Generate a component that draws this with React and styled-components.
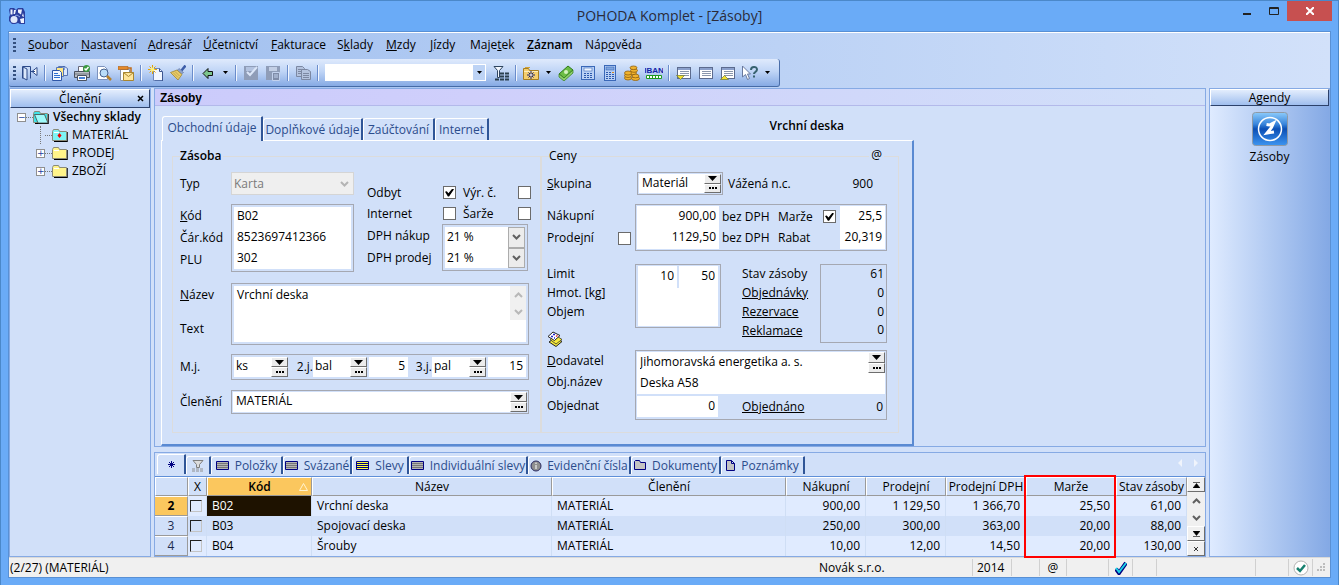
import React from 'react'
import styled, { createGlobalStyle, css } from 'styled-components';

const menu = [
  ['', 'S', 'oubor', 53], ['', 'N', 'astavení', 67], ['', 'A', 'dresář', 55], ['', 'Ú', 'četnictví', 68],
  ['', 'F', 'akturace', 66], ['S', 'k', 'lady', 49], ['', 'M', 'zdy', 44], ['', 'J', 'ízdy', 40],
  ['Maje', 't', 'ek', 57], ['', 'Z', 'áznam', 58], ['Náp', 'o', 'věda', 60],
];

const rows = [
  { no: 2, kod: 'B02', nazev: 'Vrchní deska', nakupni: '900,00', prodejni: '1 129,50', dph: '1 366,70', marze: '25,50', stav: '61,00' },
  { no: 3, kod: 'B03', nazev: 'Spojovací deska', nakupni: '250,00', prodejni: '300,00', dph: '363,00', marze: '20,00', stav: '88,00' },
  { no: 4, kod: 'B04', nazev: 'Šrouby', nakupni: '10,00', prodejni: '12,00', dph: '14,50', marze: '20,00', stav: '130,00' },
];

/* ---------- icons ---------- */

const Icon = ({ children, w = 16, h = 16 }) => (
  <svg width={w} height={h} viewBox={`0 0 ${w} ${h}`} aria-hidden="true">{children}</svg>
);

const AppLogo = () => (
  <Icon w={18} h={18}>
    <path d="M2 1h4l2 2 2-2h5l2 4v12h-5l-2-1-3 1H4l-3-3v-4l1-2-1-5z" fill="#2b3f9e" />
    <path d="M2.500 2.500h2v5h-2zM6 3h2l-1 4H5.500zM10 2.500h4l-1 5-3-2zM15 6l1 4-2-1zM12 12l4-1v5h-3z" fill="#eef3fd" />
    <circle cx="6" cy="12.500" r="3.500" fill="#dfe8fb" />
    <path d="M9 8l3 2M9 8l-2 1" stroke="#8fa8e6" />
  </Icon>
);

const ExitIcon = () => (
  <Icon>
    <path d="M.500 13.500V1.500h8v12" fill="none" stroke="#2c4a8a" />
    <path d="M1 2l4 2v11l-4-2z" fill="#dbe8fb" stroke="#2c4a8a" />
    <path d="M15 2.500v8l-5-4z" fill="#fff" stroke="#2c4a8a" />
    <path d="M9 6.500h4" stroke="#2c4a8a" />
  </Icon>
);

const DocsIcon = () => (
  <Icon>
    <path d="M6.500 1.500h6l3 2v7h-9z" fill="#dbe9ff" stroke="#5573b5" />
    <path d="M4.500 2.500h6l1 1v8h-7z" fill="#ffe884" stroke="#5573b5" />
    <path d="M.500 5.500h7l2 2v8h-9z" fill="#f4f8ff" stroke="#2f57a8" />
    <path d="M2 8.500h4M2 10.500h6M2 12.500h6" stroke="#2f6fd0" />
    <path d="M12 1v4" stroke="#2f57a8" />
  </Icon>
);

const PrinterIcon = () => (
  <Icon>
    <path d="M4.500 6V1.500h5V6" fill="#fff" stroke="#667" />
    <path d="M.500 6.500h15v6h-15z" fill="#b9bec6" stroke="#4b5260" />
    <path d="M1 9h14" stroke="#70767f" />
    <path d="M3.500 10.500h9v5h-9z" fill="#fff" stroke="#4b5260" />
    <path d="M5 13h6" stroke="#4a84da" strokeWidth="2" />
    <circle cx="12.500" cy="3.500" r="3.500" fill="#3c9a43" />
    <path d="M10.500 3.500l1.500 1.500 2.500-3" fill="none" stroke="#fff" strokeWidth="1.500" />
  </Icon>
);

const PreviewIcon = () => (
  <Icon>
    <path d="M1.500 1.500h7l3 3v10h-10z" fill="#fff" stroke="#7d92bd" />
    <circle cx="8" cy="8" r="4" fill="#b9dcf8" stroke="#46618f" />
    <path d="M11 11l4 4" stroke="#b7802a" strokeWidth="2.500" />
  </Icon>
);

const MailIcon = () => (
  <Icon>
    <path d="M2.500 4.500h9v11h-9z" fill="#fff" stroke="#8a94a8" />
    <path d="M0 1.500h10v3H0z" fill="#e58a2a" stroke="#a85a12" strokeWidth=".6" />
    <path d="M10 3h3v4" fill="none" stroke="#c06c1a" strokeWidth="1.500" />
    <path d="M5.500 7.500h10v8h-10z" fill="#ffe59a" stroke="#a9862f" />
    <path d="M5.500 7.500l5 4 5-4" fill="none" stroke="#a9862f" />
  </Icon>
);

const NewIcon = () => (
  <Icon>
    <path d="M5.500 3.500h6l3 3v9h-9z" fill="#f2f7ff" stroke="#6d87bd" />
    <path d="M11.500 3.500v3h3" fill="none" stroke="#3d5690" />
    <path d="M14.500 7v9H7" fill="none" stroke="#3d5690" />
    <path d="M4.500 0v9M0 4.500h9M1.500 1.500l6 6M7.500 1.500l-6 6" stroke="#e8a400" />
    <circle cx="4.500" cy="4.500" r="2" fill="#fff27a" />
  </Icon>
);

const BrushIcon = () => (
  <Icon>
    <path d="M15.500.500l-4 5" stroke="#3d5da8" strokeWidth="2.500" />
    <path d="M9 3.500l4.500 4-2 1.500L7 5.500z" fill="#8fa4cf" stroke="#5a6e9c" strokeWidth=".6" />
    <path d="M7 5l5 4.500-4 5.500L.500 7.500z" fill="#e6ca6a" stroke="#9a7d22" strokeWidth=".7" />
    <path d="M3 7.500l5 5M5 6.500l4.500 4.500" stroke="#b2922f" strokeWidth=".6" />
  </Icon>
);

const BackIcon = () => (
  <Icon><path d="M3 8.500L8 3.500v3h4.500v4H8v3z" fill="#7cc58c" stroke="#111" /></Icon>
);

const SaveIcon = ({ second }) => (
  <Icon>
    <path d="M1 1h14v14H1z" fill="#8f9db8" />
    {!second && <path d="M3 2h9v4H3z" fill="#b3c3e0" />}
    {!second && <path d="M4 7l3 3 7-8" fill="none" stroke="#dbe6f8" strokeWidth="2" />}
    {second && <path d="M4 2h8v4H4z" fill="#c3cfe5" />}
    {second && <path d="M7.500 7.500h7v8h-7z" fill="#7f8ca8" stroke="#c3d2ee" />}
    {second && <path d="M9 10h4M9 12h4" stroke="#c3d2ee" />}
  </Icon>
);

const CopyIcon = () => (
  <Icon>
    <path d="M1.500 1.500h6l2 2v8h-8z" fill="#b4c3de" stroke="#7c88a2" />
    <path d="M3 4.500h4M3 6.500h4M3 8.500h4" stroke="#7c88a2" />
    <path d="M6.500 4.500h6l3 2v8h-9z" fill="#b4c3de" stroke="#7c88a2" />
    <path d="M8 8.500h6M8 10.500h6M8 12.500h6" stroke="#7c88a2" />
  </Icon>
);

const FilterIcon = () => (
  <Icon>
    <path d="M1 1.500h9L6.500 5.500v7h-2v-7z" fill="#f4f8ff" stroke="#2f4560" />
    <path d="M7 8.500h9M7 11.500h9M2 14.500h14" stroke="#2a3f4f" strokeWidth="2" strokeDasharray="4 1" />
  </Icon>
);

const FolderStarIcon = () => (
  <Icon>
    <path d="M.500 3.500h5l1 2h9v9h-15z" fill="#f5cf6e" stroke="#a77f20" />
    <path d="M2 2.500h5" stroke="#d1a23a" />
    <path d="M1 6.500h14" stroke="#fdeebc" />
    <path d="M8 6v8M4 10h8M5.500 7.500l5 5M10.500 7.500l-5 5" stroke="#1a2370" />
    <circle cx="8" cy="10" r="1" fill="#fff" />
  </Icon>
);

const MoneyIcon = () => (
  <Icon>
    <path d="M1 9l9-8 5 4-9 8z" fill="#6cbd45" stroke="#2e7a1a" />
    <path d="M1 9v3l5 4 9-8V5l-9 8z" fill="#8fd06a" stroke="#2e7a1a" strokeWidth=".7" />
    <circle cx="8" cy="7" r="2" fill="#d5f2c0" />
  </Icon>
);

const CalcIcon = ({ tall }) => (
  <Icon>
    <rect x={tall ? 2.5 : 1.5} y={tall ? 0.5 : 1.5} width={tall ? 11 : 13} height={tall ? 15 : 13} fill="#b9d1f5" stroke="#3a68b8" />
    <rect x="4" y={tall ? 2 : 3} width="8" height="3" fill={tall ? '#7fa6de' : '#eef5ff'} stroke="#3a68b8" strokeWidth=".6" />
    <path d={tall ? 'M4 7.500h8M4 9.500h8M4 11.500h8M4 13.500h8' : 'M4 8.500h9M4 10.500h9M4 12.500h9'} stroke="#2c59ad" strokeDasharray="2 1" />
    {tall && <path d="M10 7.500h2" stroke="#d68b22" />}
  </Icon>
);

const CoinsIcon = () => (
  <Icon>
    <g fill="#f0b32e" stroke="#91600c" strokeWidth=".8">
      <ellipse cx="9" cy="8" rx="3.500" ry="1.800" />
      <ellipse cx="10" cy="5.500" rx="3.500" ry="1.800" />
      <ellipse cx="9.500" cy="2.800" rx="3.500" ry="1.800" />
      <ellipse cx="4" cy="13" rx="3.500" ry="2" />
      <ellipse cx="4" cy="10.500" rx="3.500" ry="2" />
      <ellipse cx="4" cy="8" rx="3.500" ry="2" />
      <ellipse cx="11.500" cy="13.500" rx="4" ry="2" />
      <ellipse cx="11.500" cy="11" rx="3.500" ry="1.800" />
    </g>
  </Icon>
);

const IbanIcon = () => (
  <Icon w={18}>
    <text x="9" y="8" textAnchor="middle" fontSize="8" fontWeight="bold" fill="#1423a8" fontFamily="Liberation Sans Narrow, Liberation Sans, sans-serif">IBAN</text>
    <path d="M1.500 10.500h15v3h-15z" fill="#fff" stroke="#1f9a1f" />
    <path d="M4.500 11v3M7.500 11v3M10.500 11v3M13.500 11v3" stroke="#1f9a1f" />
  </Icon>
);

const ListIcon = ({ mark }) => (
  <Icon>
    <rect x="1.500" y="2.500" width="13" height="11" fill="#fff" stroke="#5c6b8e" />
    <path d="M2 4h12" stroke="#8ba0cc" strokeWidth="2" />
    <path d="M4 6.500h9M4 8.500h9M4 10.500h9" stroke="#8a96ac" />
    {mark === 'down' && <path d="M.500 10.500h8l-4 4z" fill="#f4e02e" stroke="#6d7a35" strokeWidth=".7" />}
    {mark === 'up' && <path d="M.500 14.500h8l-4-4z" fill="#f4e02e" stroke="#6d7a35" strokeWidth=".7" />}
  </Icon>
);

const HelpIcon = () => (
  <Icon>
    <path d="M.500 1v11l3-2.500 2 5 2-1-2-4.500h3z" fill="#fff" stroke="#68799e" />
    <path d="M9 5c0-4 6-4 6-.5 0 2.500-3 2.500-3 4.500M12 10.500v2" fill="none" stroke="#37626f" strokeWidth="2" />
  </Icon>
);

const FolderIcon = ({ color = '#fff48a', dot, open }) => (
  <Icon w={16} h={14}>
    <path d="M15 4v9.500H2" fill="none" stroke="#000" strokeWidth="1.500" />
    <path d="M.500 12.500v-9l1-2h5l1 2h7v9z" fill={color} stroke="#8a8a78" />
    {!open && <path d="M2 4.500h5" stroke="#fff" />}
    {open && <path d="M1.500 4.500h10l3.500 8.500H5z" fill="#9ffafa" stroke="#444" strokeWidth=".8" />}
    {dot && <path d="M7.500 5l2 2.500-2 2.500-2-2.500z" fill="#e00" />}
  </Icon>
);

const TableIcon = ({ fill = '#b4b4b4' }) => (
  <Icon w={14} h={10}>
    <path d="M.500.500h12v8h-12z" fill={fill} stroke="#000080" />
    <path d="M1 2.500h11M1 4.500h11M1 6.500h11" stroke={fill === '#ffff3c' ? '#000080' : '#777'} />
  </Icon>
);

const InfoIcon = () => (
  <Icon w={12} h={12}>
    <circle cx="6" cy="6" r="5" fill="#8f8f8f" stroke="#2a2a60" />
    <path d="M6 2.500v1.500M6 5v4" stroke="#ddd" strokeWidth="1.500" />
  </Icon>
);

const DocFolderIcon = () => (
  <Icon w={13} h={11}><path d="M.500 9.500v-8l1-1h4l1 2h5v7z" fill="#c3c3c3" stroke="#000080" /></Icon>
);

const NoteIcon = () => (
  <Icon w={10} h={12}><path d="M.500.500h5l3 3v7h-8zM5.500.500v3h3" fill="#c3c3c3" stroke="#000080" /></Icon>
);

const GreyFilterIcon = () => (
  <Icon w={12} h={12}>
    <path d="M1 .500h10L7.500 4.500v3h-3v-3z" fill="#ddd" stroke="#7e7e7e" />
    <path d="M0 9h12M0 11h12" stroke="#8e8e8e" strokeDasharray="3 1" />
  </Icon>
);

const CardsIcon = () => (
  <Icon>
    <path d="M2 11l6-4 7 3.500-6 5z" fill="#f7ea3c" stroke="#222" />
    <path d="M3 8.500l6-4 6 4-6 4.500z" fill="#f7ea3c" stroke="#222" strokeWidth=".7" />
    <path d="M1 5.500l5-4.500 7 3.500-5.500 5z" fill="#fff" stroke="#222" />
    <path d="M4 5.500h2M6 3.500h2M7 7h1" stroke="#22c" strokeWidth="1.500" />
    <path d="M9 5.500l1.500-1" stroke="#d22" strokeWidth="1.500" />
  </Icon>
);

const StockIcon = () => (
  <Icon w={36} h={34}>
    <defs>
      <linearGradient id="stock" x1="0" y1="0" x2="0" y2="1">
        <stop offset="0" stopColor="#8ccbfb" />
        <stop offset=".35" stopColor="#3a86dc" />
        <stop offset=".5" stopColor="#0b4fb5" />
        <stop offset="1" stopColor="#3d95f0" />
      </linearGradient>
    </defs>
    <rect x=".5" y=".5" width="35" height="33" rx="3" fill="url(#stock)" stroke="#8f9aa6" />
    <circle cx="18" cy="17" r="11.500" fill="none" stroke="#fff" strokeWidth="1.500" />
    <path d="M14.500 12.500l3 .5 4-2-2 4.500-4.500 5.500 3-.5 4-.5" fill="none" stroke="#fff" strokeWidth="3" />
  </Icon>
);

const Chevron = ({ up, color = '#606060' }) => (
  <Icon w={9} h={6}><path d={up ? 'M1 5l3.500-3.500L8 5' : 'M1 1l3.500 3.500L8 1'} fill="none" stroke={color} strokeWidth="2" /></Icon>
);

const Caret = () => <Icon w={7} h={4}><path d="M1 0h5L3.500 3z" fill="#000" /></Icon>;

const CheckMark = () => (
  <Icon w={12} h={14}>
    <path d="M1 8l3 4 7-10" fill="none" stroke="#000080" strokeWidth="4" />
    <path d="M1 7l3 4 7-9" fill="none" stroke="#19d3e6" strokeWidth="2" />
  </Icon>
);

const OkIcon = () => (
  <Icon>
    <circle cx="8" cy="8" r="7" fill="#fff" stroke="#b3b3b3" />
    <path d="M4 8l3 3 5-6" fill="none" stroke="#16806f" strokeWidth="2.500" />
  </Icon>
);

/* ---------- small shared pieces ---------- */

function Picker({ label }) {
  return (
    <PickerBox>
      <PickerButton type="button" aria-label={`${label} – rozbalit`}><Icon w={9} h={5}><path d="M0 0h9L4.500 5z" fill="#000" /></Icon></PickerButton>
      <PickerButton type="button" aria-label={`${label} – výběr`}><Icon w={8} h={2}><path d="M0 0h2v2H0zM3 0h2v2H3zM6 0h2v2H6z" fill="#000" /></Icon></PickerButton>
    </PickerBox>
  )
}

function Tool({ children, label }) {
  return <ToolButton type="button" aria-label={label}>{children}</ToolButton>
}

function VatSelect({ id }) {
  return (
    <SelectWrap>
      <Select id={id} defaultValue="21 %"><option>21 %</option></Select>
      <SelectArrow><Chevron /></SelectArrow>
    </SelectWrap>
  )
}

/* ---------- page parts ---------- */

function Toolbar() {
  return (
    <ToolBar>
      <Grip />
      <Tool label="Konec"><ExitIcon /></Tool>
      <Separator />
      <Tool label="Kopie dokladu"><DocsIcon /></Tool>
      <Tool label="Tisk"><PrinterIcon /></Tool>
      <Tool label="Náhled"><PreviewIcon /></Tool>
      <Tool label="Odeslat"><MailIcon /></Tool>
      <Separator />
      <Tool label="Nový"><NewIcon /></Tool>
      <Tool label="Vyčistit"><BrushIcon /></Tool>
      <Separator />
      <Tool label="Zpět"><BackIcon /></Tool>
      <CaretButton type="button" aria-label="Historie"><Caret /></CaretButton>
      <Separator />
      <Tool label="Uložit"><SaveIcon /></Tool>
      <Tool label="Uložit kopii"><SaveIcon second /></Tool>
      <Separator />
      <Tool label="Kopírovat"><CopyIcon /></Tool>
      <Separator />
      <SearchBox>
        <SearchInput type="text" aria-label="Hledat" />
        <SearchArrow type="button" aria-label="Rozbalit hledání"><Caret /></SearchArrow>
      </SearchBox>
      <Tool label="Filtr"><FilterIcon /></Tool>
      <Separator />
      <Tool label="Oblíbené"><FolderStarIcon /></Tool>
      <CaretButton type="button" aria-label="Další oblíbené"><Caret /></CaretButton>
      <Tool label="Peníze"><MoneyIcon /></Tool>
      <Tool label="Kalkulačka"><CalcIcon /></Tool>
      <Tool label="Přepočet"><CalcIcon tall /></Tool>
      <Tool label="Měny"><CoinsIcon /></Tool>
      <Tool label="Kontrola účtu"><IbanIcon /></Tool>
      <Separator />
      <Tool label="Dolů"><ListIcon mark="down" /></Tool>
      <Tool label="Seznam"><ListIcon /></Tool>
      <Tool label="Nahoru"><ListIcon mark="up" /></Tool>
      <Tool label="Nápověda"><HelpIcon /></Tool>
      <CaretButton type="button" aria-label="Další"><Caret /></CaretButton>
    </ToolBar>
  )
}

function Tree() {
  return (
    <TreeList>
      <TreeRow>
        <Expander>−</Expander><Dots /><FolderIcon color="#3fe3e8" open /><strong>Všechny sklady</strong>
      </TreeRow>
      <TreeBranch>
        <TreeRow><NoExpander /><Dots /><FolderIcon color="#7df4f5" dot /><span>MATERIÁL</span></TreeRow>
        <TreeRow><Expander>+</Expander><Dots /><FolderIcon /><span>PRODEJ</span></TreeRow>
        <TreeRow><Expander>+</Expander><Dots /><FolderIcon /><span>ZBOŽÍ</span></TreeRow>
      </TreeBranch>
    </TreeList>
  )
}

function StockFields() {
  return (
    <Group>
      <legend><strong>Zásoba</strong></legend>
      <TopFields>
        <div>
          <Line $h={23}>
            <Label htmlFor="typ">Typ</Label>
            <SelectWrap $disabled>
              <Select id="typ" disabled defaultValue="Karta"><option>Karta</option></Select>
              <PlainArrow><Chevron color="#b4b4b4" /></PlainArrow>
            </SelectWrap>
          </Line>
          <Line $h={68} $mt={9}>
            <Labels>
              <Label htmlFor="kod"><u>K</u>ód</Label>
              <Label htmlFor="carkod">Čár.kód</Label>
              <Label htmlFor="plu">PLU</Label>
            </Labels>
            <Frame>
              <Input id="kod" defaultValue="B02" />
              <Input id="carkod" defaultValue="8523697412366" />
              <Input id="plu" defaultValue="302" />
            </Frame>
          </Line>
        </div>
        <SideFields>
          <CheckLine>
            <label htmlFor="odbyt">Odbyt</label><Check id="odbyt" defaultChecked />
            <label htmlFor="vyrc">Výr. č.</label><Check id="vyrc" />
          </CheckLine>
          <CheckLine>
            <label htmlFor="inet">Internet</label><Check id="inet" />
            <label htmlFor="sarze">Šarže</label><Check id="sarze" />
          </CheckLine>
          <VatLine>
            <Labels>
              <Label htmlFor="dphn">DPH nákup</Label>
              <Label htmlFor="dphp">DPH prodej</Label>
            </Labels>
            <Frame>
              <VatSelect id="dphn" />
              <VatSelect id="dphp" />
            </Frame>
          </VatLine>
        </SideFields>
      </TopFields>

      <Line $h={62} $mt={11}>
        <NameLabels>
          <Label htmlFor="nazev"><u>N</u>ázev</Label>
          <Label htmlFor="text">Text</Label>
        </NameLabels>
        <NameFrame>
          <NameRow>
            <NameArea id="nazev" rows="1" defaultValue="Vrchní deska" />
            <ScrollStub><Chevron up color="#b8b8b8" /><Chevron color="#b8b8b8" /></ScrollStub>
          </NameRow>
          <Input id="text" />
        </NameFrame>
      </Line>

      <Line $h={26} $mt={9}>
        <Label htmlFor="mj">M.j.</Label>
        <UnitFrame>
          <Input id="mj" defaultValue="ks" /><Picker label="M.j." />
          <label htmlFor="mj2">2.j.</label>
          <Input id="mj2" defaultValue="bal" /><Picker label="2.j." />
          <Input $right aria-label="Počet 2.j." defaultValue="5" />
          <label htmlFor="mj3">3.j.</label>
          <Input id="mj3" defaultValue="pal" /><Picker label="3.j." />
          <Input $right aria-label="Počet 3.j." defaultValue="15" />
        </UnitFrame>
      </Line>

      <Line $h={24} $mt={10}>
        <Label htmlFor="cleneni">Členění</Label>
        <PickFrame>
          <Input id="cleneni" defaultValue="MATERIÁL" /><Picker label="Členění" />
        </PickFrame>
      </Line>
    </Group>
  )
}

function PriceFields() {
  return (
    <Group $right>
      <legend>Ceny</legend>
      <AtSign>@</AtSign>
      <Line $h={23} $label={90}>
        <Label htmlFor="skupina"><u>S</u>kupina</Label>
        <GroupRow>
          <PickFrame>
            <Input id="skupina" defaultValue="Materiál" /><Picker label="Skupina" />
          </PickFrame>
          <span>Vážená n.c.</span>
          <output>900</output>
        </GroupRow>
      </Line>

      <Line $h={47} $mt={9} $label={88}>
        <Labels>
          <Label htmlFor="nakupni">Nákupní</Label>
          <WithCheck><Label htmlFor="prodejni">Prodejní</Label><Check aria-label="Pevná prodejní cena" /></WithCheck>
        </Labels>
        <PriceFrame>
          <Input $right id="nakupni" defaultValue="900,00" />
          <span>bez DPH</span>
          <label htmlFor="marze">Marže</label>
          <Check aria-label="Pevná marže" defaultChecked />
          <Input $right id="marze" defaultValue="25,5" />
          <Input $right id="prodejni" defaultValue="1129,50" />
          <span>bez DPH</span>
          <label htmlFor="rabat">Rabat</label>
          <span />
          <Input $right id="rabat" defaultValue="20,319" />
        </PriceFrame>
      </Line>

      <LimitArea>
        <LimitLabels>
          <Label htmlFor="limit">Limit</Label>
          <Label htmlFor="hmot">Hmot. [kg]</Label>
          <Label htmlFor="objem">Objem</Label>
        </LimitLabels>
        <LimitFrame>
          <Pair>
            <Input $right id="limit" defaultValue="10" />
            <Input $right aria-label="Limit max" defaultValue="50" />
          </Pair>
          <Input $right id="hmot" />
          <Input $right id="objem" />
        </LimitFrame>
        <LimitLabels>
          <span>Stav zásoby</span>
          <TextLink href="#objednavky">Objednávky</TextLink>
          <TextLink href="#rezervace">Rezervace</TextLink>
          <TextLink href="#reklamace">Reklamace</TextLink>
        </LimitLabels>
        <Totals>
          <output>61</output><output>0</output><output>0</output><output>0</output>
        </Totals>
        <CardsButton type="button" aria-label="Adresář"><CardsIcon /></CardsButton>
      </LimitArea>

      <Line $h={69} $mt={7} $label={88}>
        <SupplierLabels>
          <Label htmlFor="dodavatel"><u>D</u>odavatel</Label>
          <Label htmlFor="objnazev">Obj.název</Label>
          <Label htmlFor="objednat">Objednat</Label>
        </SupplierLabels>
        <SupplierFrame>
          <SupplierRow>
            <Input id="dodavatel" defaultValue="Jihomoravská energetika a. s." /><Picker label="Dodavatel" />
          </SupplierRow>
          <Input id="objnazev" defaultValue="Deska A58" />
          <OrderRow>
            <Input $right id="objednat" defaultValue="0" />
            <TextLink href="#objednano">Objednáno</TextLink>
            <output>0</output>
          </OrderRow>
        </SupplierFrame>
      </Line>
    </Group>
  )
}

function Grid() {
  return (
    <GridArea>
      <Table>
        <colgroup>
          <col width="33" /><col width="19" /><col width="105" /><col /><col width="234" />
          <col width="80" /><col width="80" /><col width="80" /><col width="90" /><col width="71" />
        </colgroup>
        <thead>
          <tr>
            <th /><th>X</th>
            <SortedTh><span>Kód</span><Icon w={9} h={8}><path d="M.500 7.500L4.500.500l4 7z" fill="none" stroke="#fff3d0" /></Icon></SortedTh>
            <th>Název</th><th>Členění</th><th>Nákupní</th><th>Prodejní</th><th>Prodejní DPH</th>
            <MarkedTh>Marže</MarkedTh>
            <th>Stav zásoby</th>
          </tr>
        </thead>
        <tbody>
          {rows.map((row, i) => (
            <Row key={row.no} $active={i === 0}>
              <th scope="row">{row.no}</th>
              <td><RowCheck aria-label={`Vybrat ${row.kod}`} /></td>
              <td>{row.kod}</td>
              <td>{row.nazev}</td>
              <td>MATERIÁL</td>
              <Num>{row.nakupni}</Num>
              <Num>{row.prodejni}</Num>
              <Num>{row.dph}</Num>
              <Num>{row.marze}</Num>
              <Num>{row.stav}</Num>
            </Row>
          ))}
        </tbody>
      </Table>
      <GridScroll>
        <RaisedButton type="button" aria-label="Na začátek"><Icon w={7} h={6}><path d="M0 .500h7M3.500 1.500L7 6H0z" fill="#000" stroke="#000" strokeWidth=".6" /></Icon></RaisedButton>
        <FlatButton type="button" aria-label="Nahoru"><Chevron up /></FlatButton>
        <FlatButton type="button" aria-label="Dolů"><Chevron /></FlatButton>
        <RaisedButton type="button" aria-label="Na konec"><Icon w={7} h={6}><path d="M0 5.500h7M0 0h7L3.500 4.500z" fill="#000" stroke="#000" strokeWidth=".6" /></Icon></RaisedButton>
        <RaisedButton type="button" aria-label="Zavřít seznam"><Icon w={4} h={4}><path d="M0 0l4 4M4 0L0 4" stroke="#333" /></Icon></RaisedButton>
      </GridScroll>
    </GridArea>
  )
}

function App() {
  return (
    <Window>
      <GlobalStyle />
      <TitleBar>
        <AppLogo />
        <h1>POHODA Komplet - [Zásoby]</h1>
        <WindowButtons>
          <WindowButton type="button" aria-label="Minimalizovat"><Icon w={8} h={12}><path d="M0 9h8" stroke="#222" strokeWidth="2" /></Icon></WindowButton>
          <WindowButton type="button" aria-label="Maximalizovat"><Icon w={10} h={8}><path d="M.500.500h9v7h-9zM0 1.500h10" fill="none" stroke="#222" /></Icon></WindowButton>
          <CloseButton type="button" aria-label="Zavřít"><Icon w={8} h={8}><path d="M0 0l8 8M8 0L0 8" stroke="#fff" strokeWidth="2" /></Icon></CloseButton>
        </WindowButtons>
      </TitleBar>

      <Client>
        <Bars>
          <MenuBar>
            <Grip $gap={6} />
            {menu.map(([before, key, after, width]) => (
              <MenuItem type="button" key={before + key + after} $w={width} $bold={key === 'Z'}>
                {before}<u>{key}</u>{after}
              </MenuItem>
            ))}
          </MenuBar>
          <Toolbar />
        </Bars>

        <Workspace>
          <Panel>
            <PanelHead>
              <span>Členění</span>
              <PanelClose type="button" aria-label="Zavřít panel"><Icon w={7} h={7}><path d="M1 1l5 5M6 1L1 6" stroke="#000" strokeWidth="1.500" /></Icon></PanelClose>
            </PanelHead>
            <Tree />
          </Panel>

          <Main>
            <Agenda>
              <AgendaTitle>Zásoby</AgendaTitle>
              <FormArea>
                <TabRow>
                  <Tab type="button" $active $w={101}>Obchodní údaje</Tab>
                  <Tab type="button" $w={100}>Doplňkové údaje</Tab>
                  <Tab type="button" $w={72}>Zaúčtování</Tab>
                  <Tab type="button" $w={54}>Internet</Tab>
                  <RecordName>Vrchní deska</RecordName>
                </TabRow>
                <Sheet>
                  <StockFields />
                  <PriceFields />
                </Sheet>
              </FormArea>
            </Agenda>

            <Lower>
              <BottomTabs>
                <BottomTab type="button" $active $w={29} aria-label="Seznam"><Icon w={9} h={9}><path d="M4.500 1v7M1 4.500h7M2 2l5 5M7 2L2 7" stroke="#000080" /></Icon></BottomTab>
                <BottomTab type="button" $w={25} aria-label="Filtr"><GreyFilterIcon /></BottomTab>
                <BottomTab type="button" $w={72}><TableIcon />Položky</BottomTab>
                <BottomTab type="button" $w={69}><TableIcon />Svázané</BottomTab>
                <BottomTab type="button" $w={57}><TableIcon fill="#ffff3c" />Slevy</BottomTab>
                <BottomTab type="button" $w={119}><TableIcon />Individuální slevy</BottomTab>
                <BottomTab type="button" $w={103}><InfoIcon />Evidenční čísla</BottomTab>
                <BottomTab type="button" $w={90}><DocFolderIcon />Dokumenty</BottomTab>
                <BottomTab type="button" $w={84}><NoteIcon />Poznámky</BottomTab>
                <TabArrows>
                  <Icon w={4} h={8}><path d="M4 0v8L0 4z" fill="#f0f4fc" /></Icon>
                  <Icon w={4} h={8}><path d="M0 0v8l4-4z" fill="#f0f4fc" /></Icon>
                </TabArrows>
              </BottomTabs>
              <Grid />
            </Lower>
          </Main>

          <Panel>
            <PanelHead $small><span>Agendy</span></PanelHead>
            <Agendas>
              <AgendaButton type="button"><StockIcon />Zásoby</AgendaButton>
            </Agendas>
          </Panel>
        </Workspace>

        <StatusBar>
          <StatusCell>(2/27) (MATERIÁL)</StatusCell>
          <StatusCell $w={154}>Novák s.r.o.</StatusCell>
          <StatusCell $w={39} $line>2014</StatusCell>
          <StatusCell $w={28} $line />
          <StatusCell $w={27} $line $center>@</StatusCell>
          <StatusCell $w={42} $line />
          <StatusCell $w={24} $line $center><CheckMark /></StatusCell>
          <StatusCell $w={24} $line />
          <StatusCell $w={99} $line />
          <StatusCell $w={33} $line />
          <StatusCell $w={24} $line $center><OkIcon /></StatusCell>
          <StatusCell $w={18} $line $center>
            <Icon w={9} h={9}><path d="M6 0h2v2H6zM3 3h2v2H3zM6 3h2v2H6zM0 6h2v2H0zM3 6h2v2H3zM6 6h2v2H6z" fill="#bdbdbd" /></Icon>
          </StatusCell>
        </StatusBar>
      </Client>
    </Window>
  )
}

const GlobalStyle = createGlobalStyle`
    *, *::before, *::after { box-sizing: border-box; }
    body {
        margin: 0;
        background: #6aabf7;
        font-family: "Open Sans", "Noto Sans", sans-serif;
        font-size: 12px;
        line-height: 16px;
        color: #000;
    }
    button, input, select, textarea {
        font: inherit;
        color: inherit;
        margin: 0;
        padding: 0;
        border: 0;
        border-radius: 0;
        background: none;
    }
    button { white-space: nowrap; }
    strong { font-weight: 600; }
    svg { display: block; flex: none; }
`;

const Window = styled.div`
    display: flex;
    flex-direction: column;
    min-height: 100vh;
    padding: 0 7px 7px;
    border: 1px solid #4b88c9;
    background: #6aabf7;
`;

const TitleBar = styled.header`
    display: grid;
    grid-template-columns: 134px 1fr 134px;
    align-items: center;
    height: 30px;

    h1 {
        margin: 0;
        font-size: 14px;
        font-weight: normal;
        line-height: 28px;
        text-align: center;
        color: #2b2b3a;
    }
`;

const WindowButtons = styled.div`
    display: flex;
    justify-content: flex-end;
    align-self: start;
    margin-right: -1px;
`;

const WindowButton = styled.button`
    display: flex;
    align-items: center;
    justify-content: center;
    width: 27px;
    height: 20px;
`;

const CloseButton = styled(WindowButton)`
    width: 45px;
    background: #c75050;
`;

const Client = styled.div`
    display: flex;
    flex: 1;
    flex-direction: column;
    border: 1px solid #5990d4;
    background: #d1e0f9;
`;

const Bars = styled.div`
    border-top: 1px solid #fff;
    padding-bottom: 1px;
    background: linear-gradient(90deg, #9dbdee, #d2e1fa);
`;

const Grip = styled.span`
    width: 3px;
    height: 14px;
    margin: 0 ${(p) => p.$gap || 3}px 0 4px;
    background: repeating-linear-gradient(#34507f 0 2px, transparent 2px 4px);
`;

const MenuBar = styled.nav`
    display: flex;
    align-items: center;
    height: 26px;
    padding-bottom: 2px;
`;

const MenuItem = styled.button`
    width: ${(p) => p.$w}px;
    padding-left: 6px;
    text-align: left;
    font-weight: ${(p) => (p.$bold ? 600 : 'normal')};
`;

const ToolBar = styled.div`
    display: flex;
    align-items: center;
    width: fit-content;
    height: 28px;
    padding-right: 5px;
    border-right: 1px solid #4a6da8;
    border-bottom: 1px solid #466ba6;
    border-radius: 2px 3px 3px 2px;
    background: linear-gradient(#dfeafc, #c0d5f6 45%, #86aae4);
`;

const ToolButton = styled.button`
    display: flex;
    align-items: center;
    justify-content: center;
    width: 22px;
    height: 24px;
`;

const CaretButton = styled(ToolButton)`
    width: 13px;
`;

const Separator = styled.span`
    width: 2px;
    height: 16px;
    margin: 0 3px;
    border-left: 1px solid #6a8ccb;
    border-right: 1px solid #f1f6fe;
`;

const SearchBox = styled.div`
    display: flex;
    width: 161px;
    height: 17px;
    margin: 0 4px 0 3px;
    background: #fff;
`;

const SearchInput = styled.input`
    flex: 1;
    min-width: 0;
`;

const SearchArrow = styled.button`
    display: flex;
    align-items: center;
    justify-content: center;
    width: 14px;
    border: 1px solid #fff;
    background: #bdd3f5;
`;

const Workspace = styled.div`
    display: grid;
    flex: 1;
    grid-template-columns: 142px 1fr 121px;
    gap: 3px;
`;

const Panel = styled.aside`
    display: flex;
    flex-direction: column;
    border: 1px solid #86aae4;
`;

const PanelHead = styled.div`
    display: flex;
    align-items: center;
    height: ${(p) => (p.$small ? 17 : 19)}px;
    border: 1px solid #fff;
    border-right-color: #2c416b;
    border-bottom-color: #2c416b;
    background: linear-gradient(#e3edfd, #9fbeee);

    span {
        flex: 1;
        text-align: center;
    }
`;

const PanelClose = styled.button`
    display: flex;
    width: 12px;
    margin-left: -12px;
`;

const TreeList = styled.div`
    padding-left: 7px;
`;

const TreeBranch = styled.div`
    padding-left: 19px;
`;

const TreeRow = styled.div`
    display: flex;
    align-items: center;
    height: 18px;

    strong, span:last-child { padding-left: 4px; }
`;

const Expander = styled.i`
    width: 9px;
    height: 9px;
    border: 1px solid #8f8f8f;
    background: #fff;
    font: 9px/7px "DejaVu Sans", sans-serif;
    text-align: center;
    color: #1e3ea0;
`;

const NoExpander = styled.i`
    width: 5px;
    height: 18px;
    margin-left: 4px;
    border-left: 1px dotted #777;
`;

const Dots = styled.i`
    width: 7px;
    border-top: 1px dotted #777;
`;

const Main = styled.main`
    display: flex;
    flex-direction: column;
    gap: 5px;
    min-width: 0;
`;

const Agenda = styled.section`
    flex: 1;
    border: 1px solid #86aae4;
`;

const AgendaTitle = styled.h2`
    margin: 0;
    padding-left: 5px;
    height: 17px;
    border-bottom: 1px solid #b3b9ea;
    background: linear-gradient(90deg, #cbcbfb, #cfcffb 30%, #d1e0f9);
    font: bold 12px/18px "Liberation Sans", Arial, sans-serif;
`;

const FormArea = styled.div`
    width: 759px;
    max-width: 100%;
    padding: 10px 0 0 6px;
`;

const TabRow = styled.div`
    display: flex;
    align-items: flex-end;
    height: 24px;
    padding-left: 1px;
`;

const Tab = styled.button`
    display: flex;
    align-items: center;
    justify-content: center;
    width: ${(p) => p.$w}px;
    height: 22px;
    border-top: 1px solid #fff;
    border-left: 1px solid #fff;
    border-right: 2px solid #2f5597;
    border-radius: 3px 1px 0 0;
    background: #d1e0f9;
    color: #2b4c8c;
    ${(p) => p.$active && css`
        height: 25px;
        margin-bottom: -1px;
        padding-bottom: 2px;
        z-index: 1;
    `}
`;

const RecordName = styled.strong`
    margin-left: auto;
    padding: 2px 70px 0 0;
    align-self: flex-start;
`;

const Sheet = styled.div`
    display: grid;
    grid-template-columns: 369px 1fr;
    padding: 7px 13px 11px 10px;
    border: 1px solid #fff;
    border-right: 2px solid #5a8ad2;
    border-bottom: 2px solid #5a8ad2;
`;

const Group = styled.fieldset`
    position: relative;
    min-width: 0;
    margin: 0;
    padding: ${(p) => (p.$right ? '8px 11px 13px 5px' : '8px 11px 18px 7px')};
    border: 1px solid #dcdcdc;

    legend {
        padding: 0 2px 0 0;
        margin-left: ${(p) => (p.$right ? '2px' : '0')};
    }
`;

// sits on the group border, opposite the legend
const AtSign = styled.span`
    position: absolute;
    top: -17px;
    right: 14px;
    padding: 0 2px;
    background: #d1e0f9;
`;

const Line = styled.div`
    display: grid;
    grid-template-columns: ${(p) => p.$label || 51}px 1fr;
    height: ${(p) => p.$h}px;
    margin-top: ${(p) => p.$mt || 0}px;
`;

const Label = styled.label`
    align-self: center;
    white-space: nowrap;
`;

const Labels = styled.div`
    display: grid;
    grid-auto-rows: 22px;
    padding-top: 1px;
`;

const SupplierLabels = styled.div`
    display: grid;
    grid-template-rows: 21px 21px 1fr;
`;

const NameLabels = styled.div`
    display: flex;
    flex-direction: column;
    align-items: flex-start;
    gap: 18px;
    padding-top: 4px;

    ${Label} { align-self: flex-start; }
`;

const Frame = styled.div`
    display: grid;
    min-width: 0;
    padding: 2px;
    border: 1px solid #a5a8b2;
`;

const NameFrame = styled(Frame)`
    grid-template-rows: 34px 1fr;
`;

const Input = styled.input.attrs({ autoComplete: 'off' })`
    width: 100%;
    min-width: 0;
    min-height: 0;
    padding: 0 3px 2px;
    background: #fff;
    text-align: ${(p) => (p.$right ? 'right' : 'left')};
`;

const Check = styled.input.attrs({ type: 'checkbox' })`
    display: grid;
    place-items: center;
    width: 13px;
    height: 13px;
    border: 1px solid #6b6b6b;
    background: #fff;
    appearance: none;

    &:checked::before {
        content: "";
        width: 9px;
        height: 8px;
        background: #000;
        clip-path: polygon(0 40%, 20% 35%, 38% 60%, 82% 0, 100% 8%, 45% 100%, 32% 100%);
    }
`;

const TopFields = styled.div`
    display: grid;
    grid-template-columns: 174px 161px;
    gap: 13px;
`;

const SideFields = styled.div`
    padding-top: 10px;
`;

const CheckLine = styled.div`
    display: grid;
    grid-template-columns: 76px 20px 55px 13px;
    align-items: center;
    height: 21px;
`;

const VatLine = styled.div`
    display: grid;
    grid-template-columns: 75px 86px;
    height: 47px;
`;

const SelectWrap = styled.div`
    display: grid;
    grid-template-columns: 1fr 17px;
    min-width: 0;
    background: #fff;
    ${(p) => p.$disabled && css`
        border: 1px solid #d5d5d5;
        background: #efefef;
        color: #7a7a7a;
    `}
`;

const Select = styled.select`
    grid-column: 1 / 3;
    grid-row: 1;
    padding-left: 2px;
    appearance: none;
    opacity: 1;
`;

const PlainArrow = styled.span`
    display: grid;
    grid-column: 2;
    grid-row: 1;
    place-items: center;
    pointer-events: none;
`;

const SelectArrow = styled(PlainArrow)`
    border: 1px solid #acacac;
    background: #ececec;
`;

const NameRow = styled.div`
    display: grid;
    grid-template-columns: 1fr 16px;
    min-height: 0;
    background: #fff;
`;

const NameArea = styled.textarea`
    padding: 1px 3px;
    resize: none;
    overflow: hidden;
`;

const ScrollStub = styled.span`
    display: grid;
    place-items: center;
    background: #f0f0f0;
`;

const UnitFrame = styled(Frame)`
    grid-template-columns: 37px 17px 25px 37px 17px 41px 24px 37px 17px 1fr;
    align-items: stretch;

    label {
        align-self: center;
        text-align: right;
    }
    ${Input} { padding-left: 2px; }
    ${Input}[aria-label] {
        margin-left: 2px;
        width: calc(100% - 2px);
    }
`;

const PickFrame = styled(Frame)`
    grid-template-columns: 1fr 17px;
    padding: 1px;
`;

const PickerBox = styled.span`
    display: grid;
    grid-template-rows: 1fr 1fr;
    min-height: 18px;
`;

const PickerButton = styled.button`
    display: grid;
    place-items: center;
    min-height: 0;
    border: 1px solid #fff;
    border-right-color: #6e6e6e;
    border-bottom-color: #6e6e6e;
    background: #ececec;
`;

const GroupRow = styled.div`
    display: grid;
    grid-template-columns: 86px 1fr auto;
    align-items: center;
    gap: 5px;
    padding-right: 14px;

    ${PickFrame} { height: 23px; }
`;

const WithCheck = styled.div`
    display: flex;
    align-items: center;
    justify-content: space-between;
    padding-right: 4px;
`;

const PriceFrame = styled(Frame)`
    grid-template-columns: 82px 56px 48px 17px 1fr;
    padding: 1px;
    align-items: stretch;

    span, label {
        align-self: center;
        padding-left: 3px;
        white-space: nowrap;
    }
    ${Check} { align-self: center; }
`;

const LimitArea = styled.div`
    position: relative;
    display: grid;
    grid-template-columns: 88px 86px 78px 1fr;
    align-items: start;
    height: 79px;
    margin-top: 13px;

    > :nth-child(3) { margin-left: 21px; }
`;

const LimitLabels = styled.div`
    display: grid;
    grid-auto-rows: 19px;
    align-items: center;
    white-space: nowrap;
`;

const LimitFrame = styled(Frame)`
    height: 64px;
    padding: 1px 2px;
    grid-template-rows: 22px 1fr 1fr;
`;

const Pair = styled.div`
    display: grid;
    grid-template-columns: 1fr 1fr;
    gap: 2px;
`;

const Totals = styled.div`
    display: grid;
    grid-template-rows: 18px 19px 19px 17px;
    align-items: center;
    width: 67px;
    height: 79px;
    justify-self: end;
    padding-right: 2px;
    border: 1px solid #a5a8b2;
    text-align: right;
`;

const CardsButton = styled.button`
    position: absolute;
    left: 0;
    bottom: -4px;
`;

const TextLink = styled.a`
    color: #000;
    text-decoration: underline;
`;

const SupplierFrame = styled(Frame)`
    grid-template-rows: 21px 21px 1fr;
    padding: 1px;
`;

const SupplierRow = styled.div`
    display: grid;
    grid-template-columns: 1fr 17px;
`;

const OrderRow = styled.div`
    display: grid;
    grid-template-columns: 81px 1fr auto;
    align-items: center;
    gap: 24px;
    padding: 2px 2px 1px 0;

    ${Input} { height: 21px; }
`;

const Lower = styled.section`
    border: 1px solid #86aae4;
`;

const BottomTabs = styled.div`
    display: flex;
    align-items: flex-end;
    height: 24px;
    padding: 2px 6px 2px 2px;
    border-bottom: 1px solid #5f8fd8;
`;

const BottomTab = styled(Tab)`
    gap: 5px;
    height: 18px;
    padding: 0 1px;
    margin-bottom: 0;
    ${(p) => p.$active && css`height: 20px;`}
`;

const TabArrows = styled.span`
    display: flex;
    gap: 12px;
    margin: 0 1px 7px auto;
`;

const GridArea = styled.div`
    display: grid;
    grid-template-columns: 1fr 18px;
`;

const Table = styled.table`
    width: 100%;
    table-layout: fixed;
    border-collapse: separate;
    border-spacing: 0;

    th, td {
        height: 20px;
        padding: 0 5px;
        white-space: nowrap;
        font-weight: normal;
        line-height: 14px;
    }
    thead th {
        height: 19px;
        padding: 0;
        border-top: 1px solid #fff;
        border-left: 1px solid #fff;
        border-right: 1px solid #9a9a9a;
        border-bottom: 1px solid #9a9a9a;
    }
    td {
        border-right: 1px solid #cfdef5;
    }
`;

const SortedTh = styled.th`
    position: relative;
    background: #fbc75e;

    && { font-weight: 600; }
    svg {
        position: absolute;
        right: 3px;
        top: 5px;
    }
`;

const MarkedTh = styled.th`
    position: relative;

    &::after {
        content: "";
        position: absolute;
        top: -3px;
        left: -3px;
        right: -1px;
        height: 83px;
        border: 2px solid #f00;
        pointer-events: none;
    }
`;

const Num = styled.td`
    text-align: right;
`;

const RowCheck = styled.input.attrs({ type: 'checkbox' })`
    display: block;
    width: 12px;
    height: 12px;
    border: 1px solid #c4c4c4;
    border-top-color: #222;
    border-left-color: #222;
    appearance: none;
`;

const Row = styled.tr`
    background: #e0ebff;

    &:nth-child(even) { background: #d1e0f9; }

    th {
        border-top: 1px solid #fff;
        border-right: 1px solid #9a9a9a;
        border-bottom: 1px solid #9a9a9a;
        background: #d1e0f9;
        color: #1d2c50;
    }
    td:nth-child(2) { padding: 0 2px; }
    ${(p) => p.$active && css`
        && th {
            background: #fbc75e;
            font-weight: bold;
            color: #000;
        }
        td:nth-child(3) {
            background: #1e1200;
            color: #fff;
        }
    `}
`;

const GridScroll = styled.div`
    display: grid;
    grid-template-rows: 15px 1fr 1fr 15px 15px;
    background: #f0f0f0;
`;

const FlatButton = styled.button`
    display: grid;
    place-items: center;
`;

const RaisedButton = styled(FlatButton)`
    border: 1px solid #fff;
    border-right-color: #6e6e6e;
    border-bottom-color: #6e6e6e;
`;

const Agendas = styled.div`
    flex: 1;
    padding-top: 6px;
    background: linear-gradient(90deg, #dfebff, #84a9e5);
`;

const AgendaButton = styled.button`
    display: flex;
    flex-direction: column;
    align-items: center;
    gap: 3px;
    width: 100%;
`;

const StatusBar = styled.footer`
    display: flex;
    align-items: center;
    height: 20px;
    border-top: 1px solid #d9d9d9;
    background: #f0f0f0;
`;

const StatusCell = styled.span`
    display: flex;
    align-items: center;
    justify-content: ${(p) => (p.$center ? 'center' : 'flex-start')};
    width: ${(p) => (p.$w ? `${p.$w}px` : 'auto')};
    height: 17px;
    border-left: ${(p) => (p.$line ? '1px solid #d0d0d0' : '0')};
    padding-left: ${(p) => (p.$center ? 0 : p.$line ? 4 : 1)}px;

    &:first-child { flex: 1; }
`;

export default App;
